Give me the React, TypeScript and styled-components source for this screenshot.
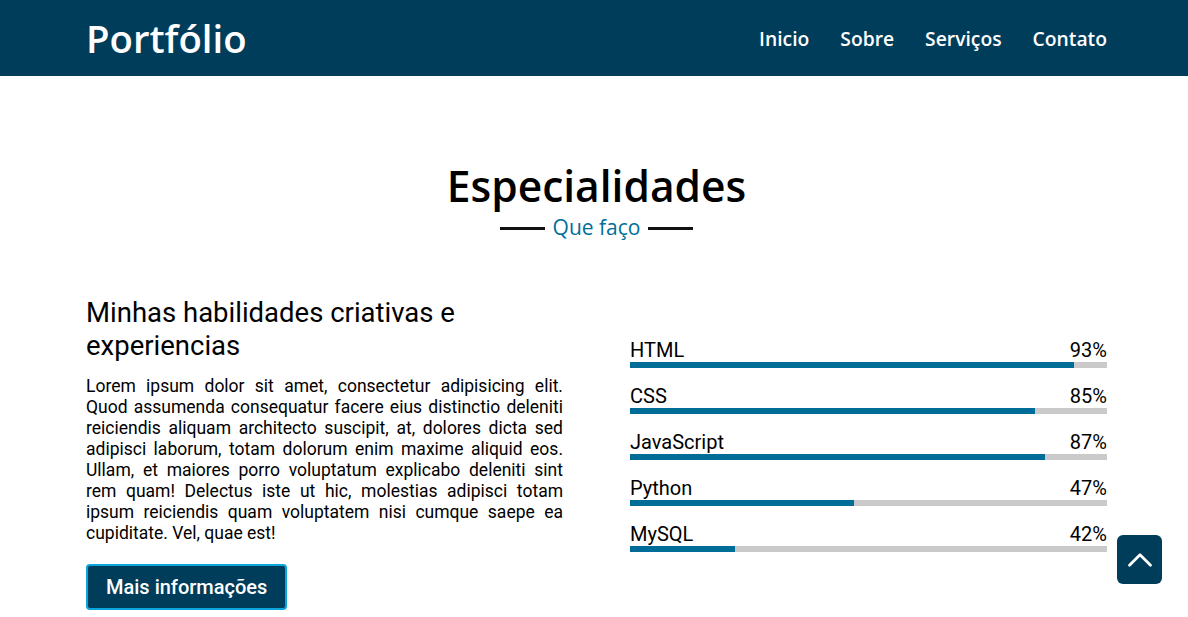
import React from "react";
import styled, { createGlobalStyle } from "styled-components";
import { FiChevronUp } from "react-icons/fi";

const GlobalStyle = createGlobalStyle`
    * { box-sizing: border-box; }
    body {
        margin: 0;
        background: #fff;
        font-family: Roboto, "Liberation Sans", sans-serif;
        color: #000;
    }
`;

// fill is what the bar draws, value is the label shown
const skills = [
    { name: "HTML", value: 93, fill: 93 },
    { name: "CSS", value: 85, fill: 85 },
    { name: "JavaScript", value: 87, fill: 87 },
    { name: "Python", value: 47, fill: 47 },
    { name: "MySQL", value: 42, fill: 22 },
];

const navLinks = ["Inicio", "Sobre", "Serviços", "Contato"];

const App: React.FC = () => {
    return (
        <>
            <GlobalStyle />
            <Header>
                <Logo>Portfólio</Logo>
                <Nav>
                    {navLinks.map(link => (
                        <NavLink key={link} href="#">{link}</NavLink>
                    ))}
                </Nav>
            </Header>
            <Section>
                <TitleBlock>
                    <Title>Especialidades</Title>
                    <Subtitle>Que faço</Subtitle>
                </TitleBlock>
                <Columns>
                    <About>
                        <AboutTitle>Minhas habilidades criativas e experiencias</AboutTitle>
                        <AboutText>
                            Lorem ipsum dolor sit amet, consectetur adipisicing elit. Quod assumenda consequatur
                            facere eius distinctio deleniti reiciendis aliquam architecto suscipit, at, dolores
                            dicta sed adipisci laborum, totam dolorum enim maxime aliquid eos. Ullam, et maiores
                            porro voluptatum explicabo deleniti sint rem quam! Delectus iste ut hic, molestias
                            adipisci totam ipsum reiciendis quam voluptatem nisi cumque saepe ea cupiditate. Vel,
                            quae est!
                        </AboutText>
                        <MoreButton>Mais informações</MoreButton>
                    </About>
                    <SkillList>
                        {skills.map(skill => (
                            <Skill key={skill.name}>
                                <SkillHead>
                                    <span>{skill.name}</span>
                                    <span>{skill.value}%</span>
                                </SkillHead>
                                <Bar>
                                    <BarFill style={{ width: `${skill.fill}%` }} />
                                </Bar>
                            </Skill>
                        ))}
                    </SkillList>
                </Columns>
            </Section>
            <TopButton aria-label="Voltar ao topo">
                <FiChevronUp />
            </TopButton>
        </>
    );
};

const Header = styled.header`
    height: 76px;
    background: #003d5b;
    display: flex;
    align-items: center;
    justify-content: space-between;
    padding: 0 81px 0 86px;
`;

const Logo = styled.h1`
    margin: 0;
    color: #fff;
    font-family: "Open Sans", "Noto Sans", sans-serif;
    font-weight: 600;
    font-size: 38.3px;
`;

const Nav = styled.nav`
    display: flex;
    gap: 31px;
`;

const NavLink = styled.a`
    color: #fff;
    text-decoration: none;
    font-family: "Open Sans", "Noto Sans", sans-serif;
    font-weight: 600;
    font-size: 19.3px;
`;

const Section = styled.section`
    padding: 82px 81px 0 86px;
`;

const TitleBlock = styled.div`
    display: flex;
    flex-direction: column;
    align-items: center;
    margin-bottom: 56px;
`;

const Title = styled.h2`
    margin: 0;
    font-family: "Open Sans", "Noto Sans", sans-serif;
    font-weight: 600;
    font-size: 42.5px;
    line-height: 56px;
`;

const Subtitle = styled.span`
    display: flex;
    align-items: center;
    gap: 8px;
    color: #006d99;
    font-family: "Open Sans", "Noto Sans", sans-serif;
    font-weight: 500;
    font-size: 21px;
    line-height: 26px;
    &::before, &::after {
        content: "";
        width: 45px;
        height: 3px;
        background: #111;
        margin-top: 3px;
    }
`;

const Columns = styled.div`
    display: grid;
    grid-template-columns: 1fr 1fr;
    column-gap: 67px;
`;

const About = styled.div`
    display: flex;
    flex-direction: column;
    align-items: flex-start;
`;

const AboutTitle = styled.h3`
    margin: 0 0 14px;
    font-weight: 400;
    font-size: 27.5px;
    line-height: 33px;
    max-width: 420px;
`;

const AboutText = styled.p`
    margin: 0 0 20px;
    font-size: 17.5px;
    line-height: 21px;
    text-align: justify;
`;

const MoreButton = styled.button`
    height: 46px;
    padding: 0 18px;
    background: #003d5b;
    color: #fff;
    border: 2px solid #0aa5dc;
    border-radius: 4px;
    font-family: Roboto, sans-serif;
    font-weight: 500;
    font-size: 20px;
    cursor: pointer;
`;

const SkillList = styled.div`
    display: flex;
    flex-direction: column;
    gap: 17px;
    padding-top: 43px;
`;

const Skill = styled.div`
    display: flex;
    flex-direction: column;
`;

const SkillHead = styled.div`
    display: flex;
    justify-content: space-between;
    font-size: 20px;
    font-weight: 400;
    line-height: 22px;
    margin-bottom: 1px;
`;

const Bar = styled.div`
    height: 6px;
    background: #cacaca;
`;

const BarFill = styled.div`
    height: 100%;
    background: #006d99;
`;

const TopButton = styled.button`
    position: fixed;
    left: 1117px;
    top: 535px;
    width: 45px;
    height: 49px;
    border: none;
    border-radius: 6px;
    background: #003d5b;
    color: #fff;
    font-size: 42px;
    display: flex;
    align-items: center;
    justify-content: center;
    padding: 0;
    cursor: pointer;
    svg { stroke-width: 1.6; }
`;

export default App;
